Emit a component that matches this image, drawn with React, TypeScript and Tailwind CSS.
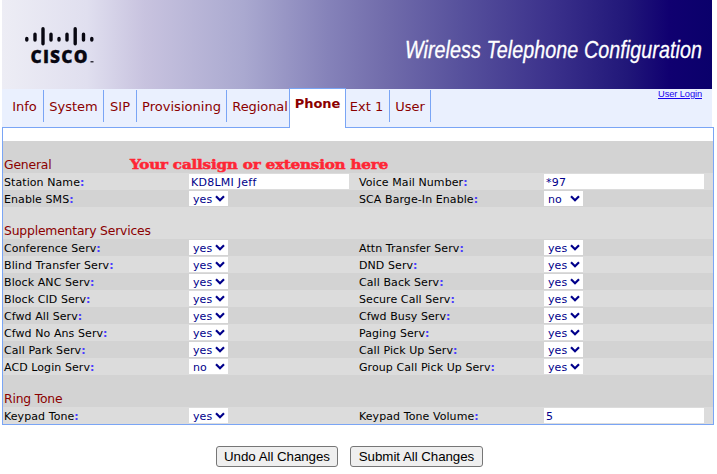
import React from "react";

type Field = { label: string; value: string; kind: "select" | "text" };

const s = (label: string, value = "yes"): Field => ({ label, value, kind: "select" });
const t = (label: string, value: string): Field => ({ label, value, kind: "text" });

const general: Field[][] = [
  [t("Station Name", "KD8LMI Jeff"), t("Voice Mail Number", "*97")],
  [s("Enable SMS"), s("SCA Barge-In Enable", "no")],
];

const services: Field[][] = [
  [s("Conference Serv"), s("Attn Transfer Serv")],
  [s("Blind Transfer Serv"), s("DND Serv")],
  [s("Block ANC Serv"), s("Call Back Serv")],
  [s("Block CID Serv"), s("Secure Call Serv")],
  [s("Cfwd All Serv"), s("Cfwd Busy Serv")],
  [s("Cfwd No Ans Serv"), s("Paging Serv")],
  [s("Call Park Serv"), s("Call Pick Up Serv")],
  [s("ACD Login Serv", "no"), s("Group Call Pick Up Serv")],
];

const ringTone: Field[][] = [[s("Keypad Tone"), t("Keypad Tone Volume", "5")]];

function Control({ field }: { field: Field }) {
  if (field.kind === "text") {
    return (
      <div className="h-[15px] w-[160px] bg-white pl-[2px] leading-[17px] tracking-[0.25px] text-[#00008b]">
        {field.value}
      </div>
    );
  }
  return (
    <div className="flex h-[15px] w-[39px] items-center justify-between bg-white pr-[3px] pl-1 leading-[15px] text-[#00008b]">
      <span className="pt-px">{field.value}</span>
      <svg className="mb-px" width="10" height="7" viewBox="0 0 10 7" fill="none" stroke="#00008b" strokeWidth="2.2">
        <path d="M1 1.3 5 5.2 9 1.3" />
      </svg>
    </div>
  );
}

function Rows({ rows, darkFirst }: { rows: Field[][]; darkFirst: boolean }) {
  return (
    <>
      {rows.map((row, i) => (
        <div
          key={row[0].label}
          className={`grid h-[17px] grid-cols-[185px_170px_185px_1fr] items-center pl-px ${
            (i % 2 === 0) === darkFirst ? "bg-[#d3d3d3]" : "bg-[#dcdcdc]"
          }`}
        >
          {row.map((field) => (
            <React.Fragment key={field.label}>
              <span className="pt-[2px] leading-[15px] whitespace-nowrap text-black">
                {field.label}
                <span className="font-bold text-[#4a3cff]">:</span>
              </span>
              <Control field={field} />
            </React.Fragment>
          ))}
        </div>
      ))}
    </>
  );
}

const heading = "flex h-8 items-end pl-px text-[12.4px] leading-4 tracking-[-0.2px] whitespace-nowrap text-[#8b0000]";

function Tab({ label, className }: { label: string; className: string }) {
  return (
    <div className={`mt-px flex h-8 items-center justify-center border-r border-[#7aa5f5] pt-px whitespace-nowrap ${className}`}>
      {label}
    </div>
  );
}

function Button({ label, className }: { label: string; className: string }) {
  return (
    <button
      className={`h-[21px] rounded-[3px] border border-[#767676] bg-[#efefef] font-['Liberation_Sans',Arial,sans-serif] text-[13.33px] leading-[19px] tracking-[-0.05px] whitespace-nowrap text-black ${className}`}
    >
      {label}
    </button>
  );
}

export default function App() {
  return (
    <div className="h-[474px] w-[717px] overflow-hidden bg-white pl-[2px] font-['DejaVu_Sans',Verdana,sans-serif] text-[11px] tracking-[0.08px]">
      <header className="flex h-[89px] w-[710px] items-start justify-between bg-[linear-gradient(90deg,#ededf5_0%,#e0dfef_12%,#c8c3df_20%,#aaa9d0_34%,#8582b9_46%,#716cab_54%,#56509c_65%,#3c328c_77%,#211779_88%,#100070_94%,#0a006b_100%)]">
        <svg className="mt-[25px] ml-[21px]" width="76" height="42" viewBox="0 0 76 42">
          <g stroke="#080711" strokeWidth="3.4" strokeLinecap="round">
            <path d="M3.8 13.5v1.6M12 9.3v5.8M20 3.8v14.9M28 9.3v5.8M36 13.5v1.6M44 9.3v5.8M52.2 3.8v14.9M60.5 9.3v5.8M68.8 13.5v1.6" />
          </g>
          <text x="7.5" y="38" textLength="57" lengthAdjust="spacing" fontFamily="'Open Sans', sans-serif" fontSize="17.3" fontWeight="800" fill="#080711" stroke="#080711" strokeWidth="0.3">CISCO</text>
          <path d="M67.5 36.8h3" stroke="#080711" strokeWidth="1.2" />
        </svg>
        <svg className="mt-[34px] mr-[5px] overflow-visible" width="306" height="34" viewBox="0 0 306 34">
          <text x="4" y="23.5" textLength="297" lengthAdjust="spacingAndGlyphs" fontFamily="'Liberation Sans Narrow', 'Liberation Sans', Arial, sans-serif" fontStyle="italic" fontSize="24" fill="white" stroke="white" strokeWidth="0.3">Wireless Telephone Configuration</text>
        </svg>
      </header>

      <nav className="flex h-[38px] w-[710px] bg-[#eaf0fe] text-[13px] tracking-[0.02px] text-[#8b0000]">
        <Tab label="Info" className="w-[42px] pl-[4px]" />
        <Tab label="System" className="w-[60px]" />
        <Tab label="SIP" className="w-[33px]" />
        <Tab label="Provisioning" className="w-[90px]" />
        <div className="mt-px flex h-8 w-[62px] items-center justify-center pt-px pl-1 tracking-[-0.08px] whitespace-nowrap">Regional</div>
        <div className="relative z-10 -mt-px flex h-10 w-[57px] shrink-0 justify-center border border-b-0 border-[#7aa5f5] bg-white pt-[6px] leading-[18px] font-bold tracking-[-0.05px]">
          Phone
        </div>
        <Tab label="Ext 1" className="w-[44px] pr-[2px]" />
        <Tab label="User" className="w-[41px]" />
        <a className="mr-[10px] ml-auto font-['Liberation_Sans',Arial,sans-serif] text-[9.3px] leading-[11px] tracking-[-0.1px] whitespace-nowrap text-[#1800ee] underline">
          User Login
        </a>
      </nav>

      <main className="w-[712px] border border-[#7aa5f5] pt-[13px]">
        <div className={`${heading} bg-[#d3d3d3]`}>
          <span>General</span>
          <svg className="ml-[76px]" width="266" height="18" viewBox="0 0 266 18">
            <text x="3" y="14" textLength="258" lengthAdjust="spacingAndGlyphs" fontFamily="'DejaVu Serif', serif" fontSize="12.8" fontWeight="bold" fill="#ff2635" stroke="#ff2635" strokeWidth="0.5">Your callsign or extension here</text>
          </svg>
        </div>
        <Rows rows={general} darkFirst={false} />
        <div className={`${heading} bg-[#dcdcdc]`}>Supplementary Services</div>
        <Rows rows={services} darkFirst />
        <div className={`${heading} bg-[#d3d3d3]`}>Ring Tone</div>
        <Rows rows={ringTone} darkFirst={false} />
      </main>

      <div className="mt-[21px] flex gap-[12px] pl-[214px]">
        <Button label="Undo All Changes" className="w-[122px]" />
        <Button label="Submit All Changes" className="w-[133px]" />
      </div>
    </div>
  );
}
